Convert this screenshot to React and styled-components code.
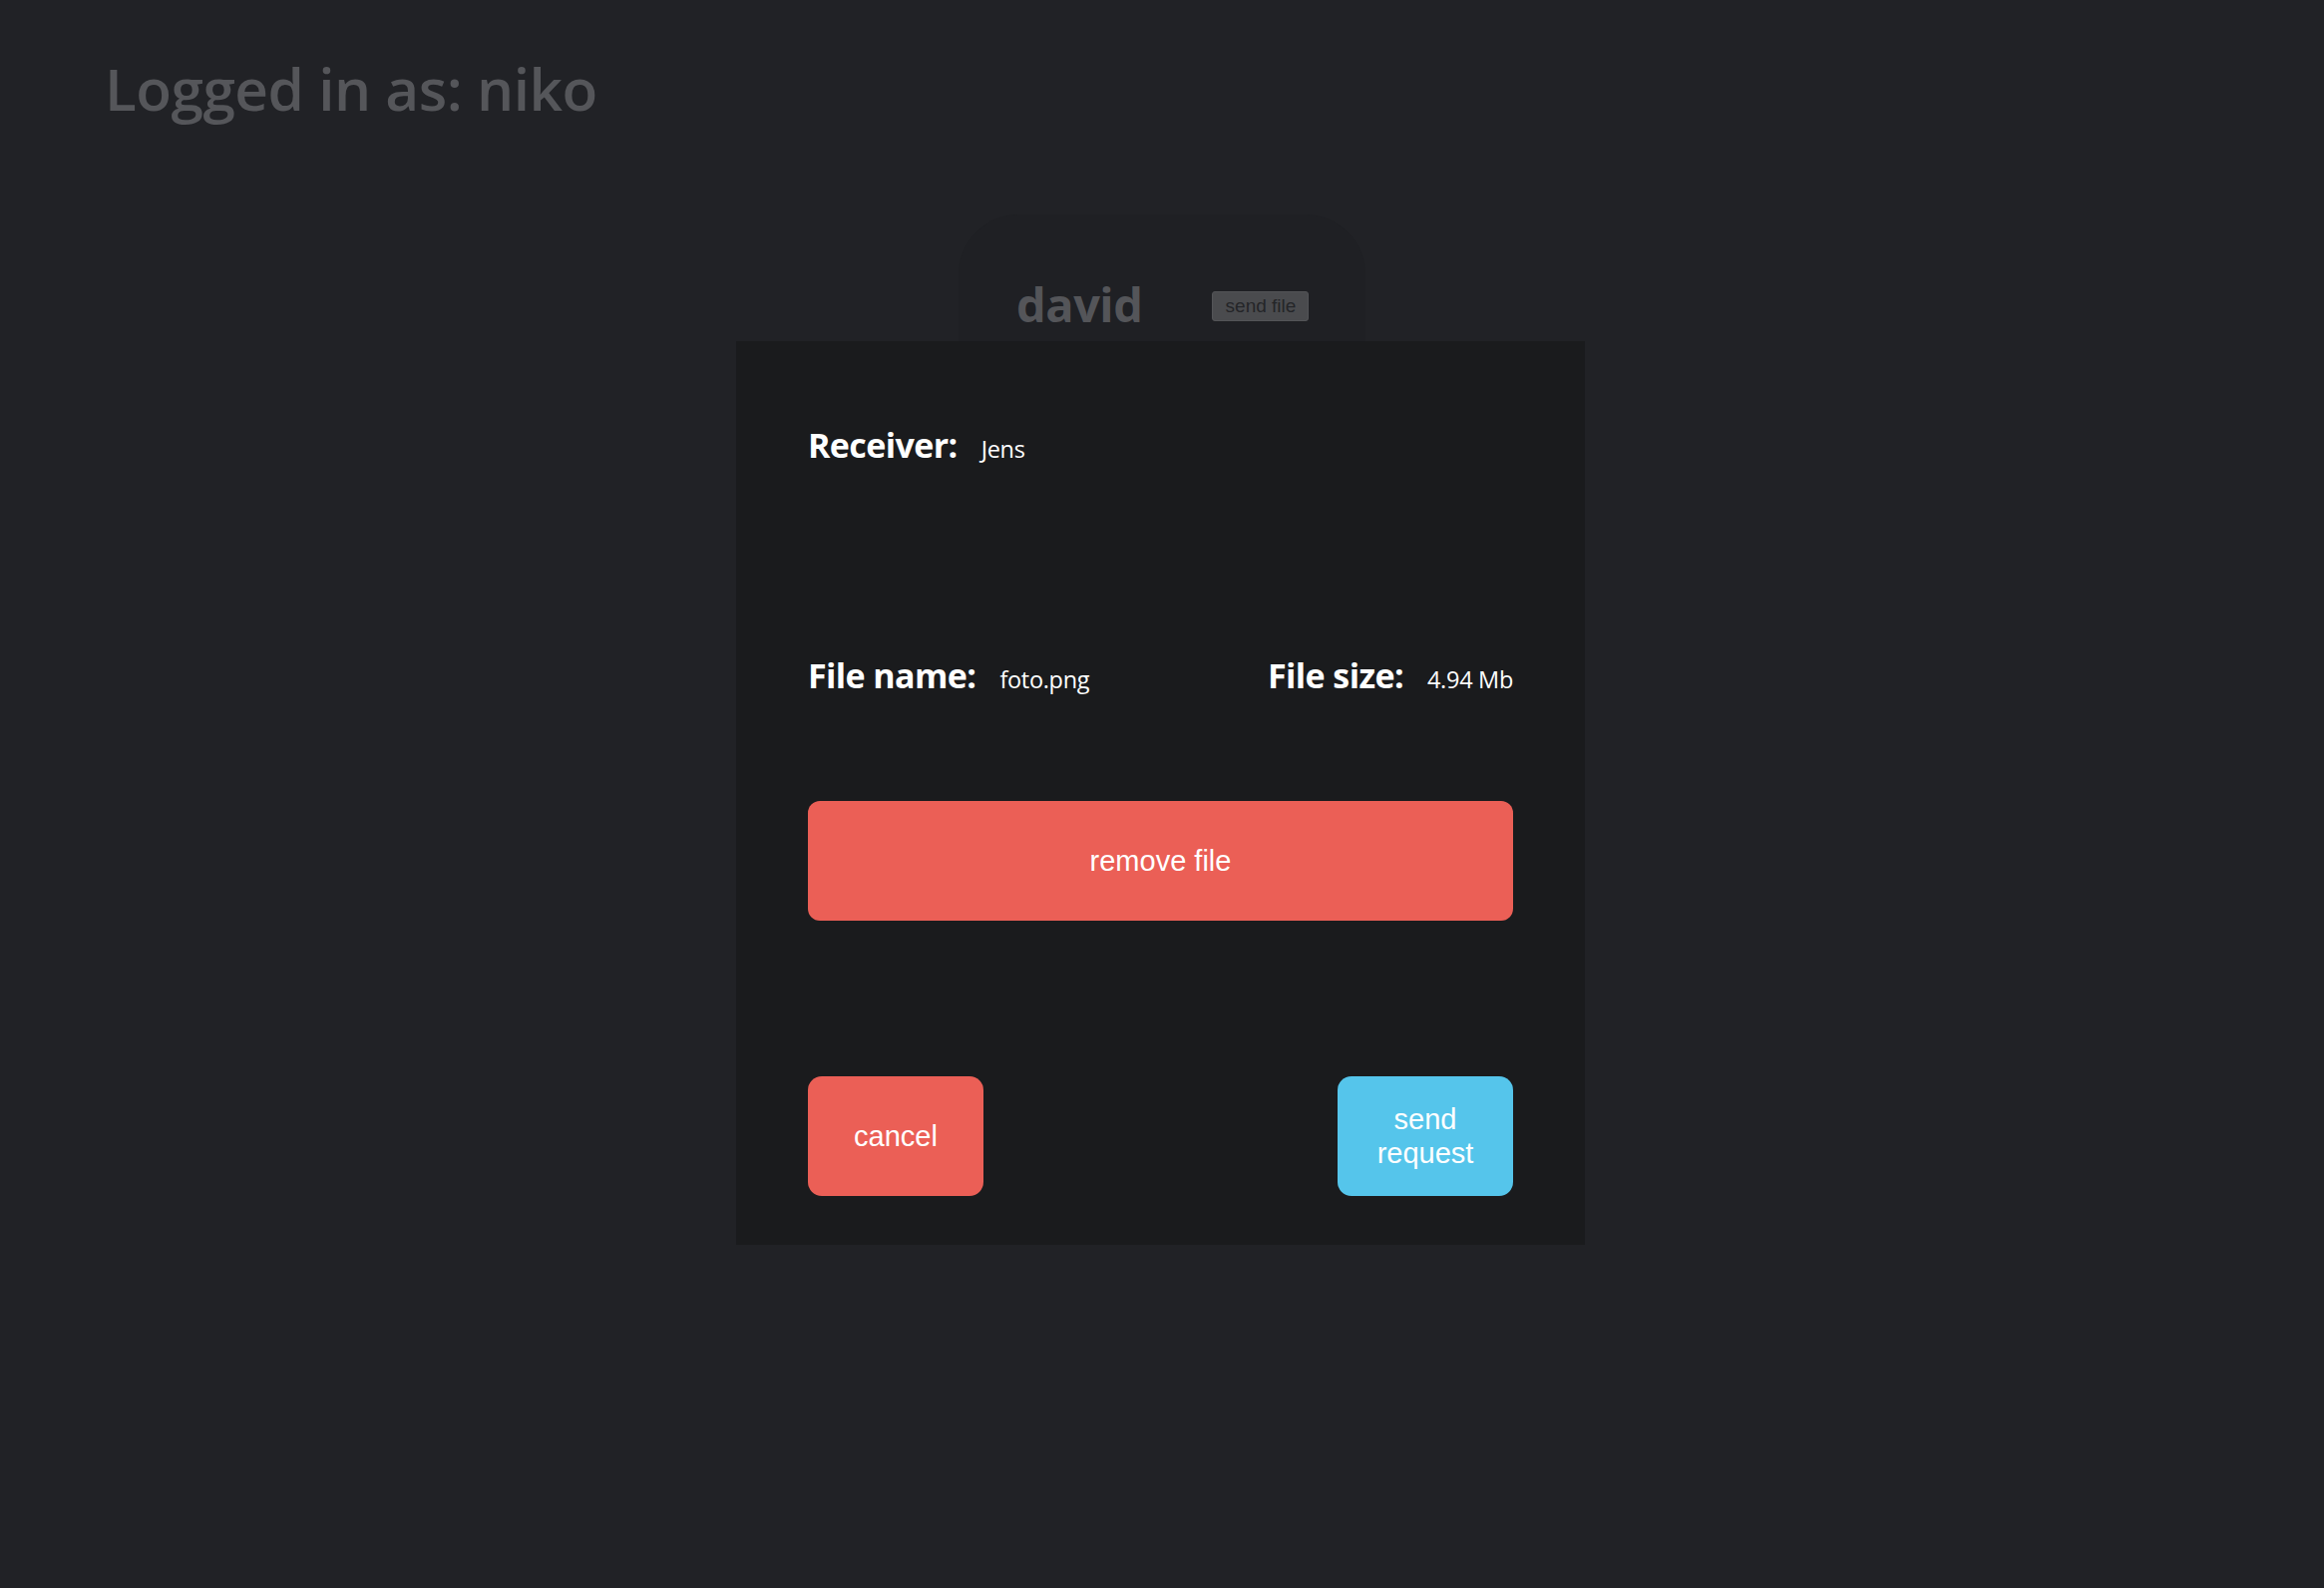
import React from "react";
import styled, { createGlobalStyle } from "styled-components";

const GlobalStyle = createGlobalStyle`
  html, body {
    margin: 0;
    padding: 0;
    background-color: #212226;
    min-height: 100%;
  }
  #root {
    min-height: 1592px;
  }
`;

function App() {
  return (
    <Page>
      <GlobalStyle />
      <Header>Logged in as: niko</Header>
      <Contacts>
        <ContactCard>
          <ContactName>david</ContactName>
          <SmallButton>send file</SmallButton>
        </ContactCard>
      </Contacts>

      <Modal>
        <InfoRow>
          <Field>
            <Label>Receiver:</Label>
            <Value>Jens</Value>
          </Field>
        </InfoRow>
        <InfoRow spaced>
          <Field>
            <Label>File name:</Label>
            <Value>foto.png</Value>
          </Field>
          <Field>
            <Label>File size:</Label>
            <Value>4.94 Mb</Value>
          </Field>
        </InfoRow>
        <WideButton color="#eb5f56">remove file</WideButton>
        <Footer>
          <SquareButton color="#eb5f56">cancel</SquareButton>
          <SquareButton color="#55c5eb">
            send
            <br />
            request
          </SquareButton>
        </Footer>
      </Modal>
    </Page>
  );
}

const Page = styled.div`
  position: relative;
  min-height: 1592px;
  font-family: "Open Sans", "Noto Sans", sans-serif;
`;

const Header = styled.h1`
  margin: 0;
  padding: 48px 0 0 105px;
  font-size: 58.5px;
  font-weight: 600;
  line-height: 80px;
  color: #55565a;
  letter-spacing: -0.5px;
`;

const Contacts = styled.div`
  display: flex;
  justify-content: center;
  padding-top: 87px;
`;

const ContactCard = styled.div`
  width: 408px;
  height: 260px;
  box-sizing: border-box;
  padding: 62px 0 0 58px;
  display: flex;
  align-items: flex-start;
  gap: 70px;
  background-color: #1f2024;
  border-radius: 60px;
`;

const ContactName = styled.span`
  font-size: 47px;
  font-weight: 700;
  line-height: 56px;
  color: #545559;
  letter-spacing: -0.5px;
`;

const SmallButton = styled.button`
  margin-top: 15px;
  width: 97px;
  height: 30px;
  padding: 0;
  font-family: "Liberation Sans", Arial, sans-serif;
  font-size: 19px;
  color: #242528;
  background-color: #4a4b4e;
  border: 1px solid #535457;
  border-radius: 3px;
`;

const Modal = styled.div`
  position: absolute;
  top: 342px;
  left: 738px;
  width: 851px;
  height: 906px;
  box-sizing: border-box;
  padding: 72px 72px 49px;
  display: flex;
  flex-direction: column;
  background-color: #1a1b1d;
`;

const InfoRow = styled.div`
  height: 64px;
  display: flex;
  align-items: center;
  justify-content: space-between;
  margin-top: ${(p) => (p.spaced ? "167px" : "0")};
`;

const Field = styled.div`
  display: flex;
  align-items: baseline;
  gap: 24px;
`;

const Label = styled.span`
  font-size: 34px;
  font-weight: 700;
  color: #ffffff;
  letter-spacing: -0.6px;
`;

const Value = styled.span`
  font-size: 23.5px;
  font-weight: 400;
  color: #ffffff;
  letter-spacing: -0.3px;
`;

const BaseButton = styled.button`
  display: flex;
  align-items: center;
  justify-content: center;
  height: 120px;
  padding: 0;
  border: none;
  font-family: "Liberation Sans", Arial, sans-serif;
  font-size: 29px;
  line-height: 34px;
  color: #ffffff;
  background-color: ${(p) => p.color};
  text-align: center;
`;

const WideButton = styled(BaseButton)`
  margin-top: 95px;
  width: 100%;
  border-radius: 12px;
`;

const Footer = styled.div`
  margin-top: 156px;
  display: flex;
  justify-content: space-between;
`;

const SquareButton = styled(BaseButton)`
  width: 176px;
  border-radius: 14px;
`;

export default App;
